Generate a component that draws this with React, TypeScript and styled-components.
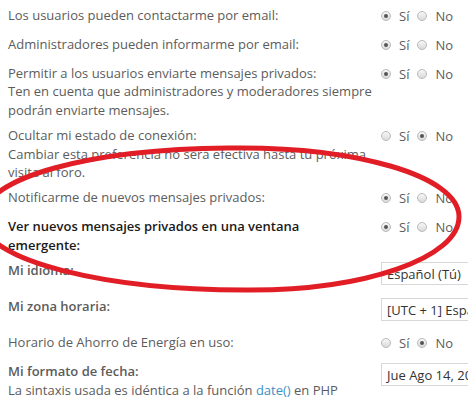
import styled, { createGlobalStyle } from 'styled-components';

const GlobalStyle = createGlobalStyle`
  html, body {
    margin: 0;
    padding: 0;
    background: #fff;
  }
  body {
    font-family: "Open Sans", "DejaVu Sans", sans-serif;
    font-size: 13px;
    color: #555;
  }
`;

const Page = styled.div`
  position: relative;
  width: 468px;
  height: 404px;
  overflow: hidden;
  padding: 4px 0 0 8px;
  box-sizing: border-box;
`;

const Settings = styled.dl`
  margin: 0;
  display: flex;
  flex-direction: column;
  gap: 5px;
`;

const Row = styled.div`
  display: flex;
  align-items: flex-start;
`;

const Label = styled.dt<{ $strong?: boolean; $semi?: boolean }>`
  width: 366px;
  margin-right: 7px;
  flex-shrink: 0;
  padding-top: 2px;
  line-height: 18.4px;
  color: ${(p) => (p.$strong ? '#1a1a1a' : '#5c5c5c')};
  font-weight: ${(p) => (p.$strong || p.$semi ? 600 : 400)};
`;

const Explain = styled.span`
  display: block;
  font-weight: 400;
  color: #5c5c5c;
`;

const Link = styled.a`
  color: #3d8fc6;
  text-decoration: none;
`;

const Control = styled.dd`
  margin: 0;
  display: flex;
  align-items: center;
  min-height: 24px;
  white-space: nowrap;
`;

const Option = styled.label`
  display: flex;
  align-items: center;
  gap: 8px;
  margin-right: 8px;
  color: #5c5c5c;
  line-height: 18px;
`;

const RadioDot = styled.span<{ $checked?: boolean }>`
  position: relative;
  width: 10px;
  height: 10px;
  border-radius: 50%;
  border: 1px solid #b9b9b9;
  background: linear-gradient(#f7f7f7, #dadada);
  box-sizing: border-box;

  &::after {
    content: '';
    display: ${(p) => (p.$checked ? 'block' : 'none')};
    position: absolute;
    left: 2px;
    top: 2px;
    width: 4px;
    height: 4px;
    border-radius: 50%;
    background: #555;
  }
`;

const SelectBox = styled.div`
  margin: 3px 0 5px;
  height: 23px;
  width: 120px;
  border: 1px solid #d7d7d7;
  box-sizing: border-box;
  padding: 0 5px;
  display: flex;
  align-items: center;
  color: #333;
  background: #fff;
`;

const Overlay = styled.svg`
  position: absolute;
  left: 0;
  top: 0;
  pointer-events: none;
`;

function YesNo({ yes }: { yes: boolean }) {
  return (
    <Control>
      <Option>
        <RadioDot $checked={yes} />
        Sí
      </Option>
      <Option>
        <RadioDot $checked={!yes} />
        No
      </Option>
    </Control>
  );
}

export default function App() {
  return (
    <>
      <GlobalStyle />
      <Page>
        <Settings>
          <Row>
            <Label>Los usuarios pueden contactarme por email:</Label>
            <YesNo yes />
          </Row>
          <Row>
            <Label>Administradores pueden informarme por email:</Label>
            <YesNo yes />
          </Row>
          <Row>
            <Label>
              Permitir a los usuarios enviarte mensajes privados:
              <Explain>Ten en cuenta que administradores y moderadores siempre podrán enviarte mensajes.</Explain>
            </Label>
            <YesNo yes />
          </Row>
          <Row>
            <Label>
              Ocultar mi estado de conexión:
              <Explain>Cambiar esta preferencia no será efectiva hasta tu próxima visita al foro.</Explain>
            </Label>
            <YesNo yes={false} />
          </Row>
          <Row>
            <Label>Notificarme de nuevos mensajes privados:</Label>
            <YesNo yes />
          </Row>
          <Row>
            <Label $strong>
              Ver nuevos mensajes privados en una ventana
              <br />
              emergente:
            </Label>
            <YesNo yes />
          </Row>
          <Row>
            <Label $semi>Mi idioma:</Label>
            <Control>
              <SelectBox>Español (Tú)</SelectBox>
            </Control>
          </Row>
          <Row>
            <Label $semi>Mi zona horaria:</Label>
            <Control>
              <SelectBox>[UTC + 1] España</SelectBox>
            </Control>
          </Row>
          <Row>
            <Label>Horario de Ahorro de Energía en uso:</Label>
            <YesNo yes={false} />
          </Row>
          <Row>
            <Label $semi>
              Mi formato de fecha:
              <Explain>
                La sintaxis usada es idéntica a la función <Link href="#">date()</Link> en PHP
              </Explain>
            </Label>
            <Control>
              <SelectBox>Jue Ago 14, 2014</SelectBox>
            </Control>
          </Row>
        </Settings>
        <Overlay width="468" height="404" viewBox="0 0 468 404">
          <path
            d="M228 148 C 356 146, 458 176, 459 216 C 460 258, 364 291, 245 290 C 110 290, -18 262, -18 219 C -18 176, 96 149, 228 148 Z"
            fill="none"
            stroke="#e11d25"
            strokeWidth="5"
          />
        </Overlay>
      </Page>
    </>
  );
}
